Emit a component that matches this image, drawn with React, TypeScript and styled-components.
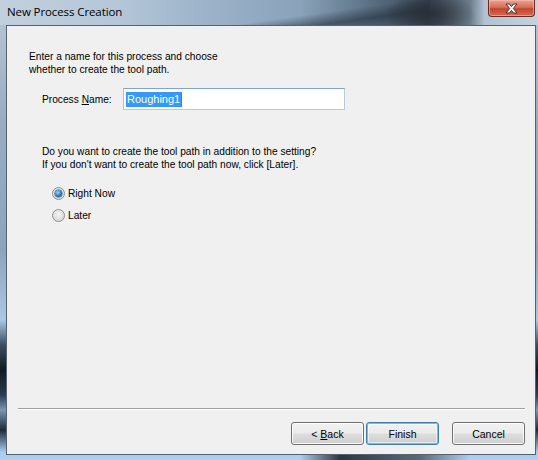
import React from "react";
import styled, { createGlobalStyle } from "styled-components";

const Global = createGlobalStyle`
  html, body { margin: 0; padding: 0; background: #ffffff; }
  body { font-family: "Liberation Sans", Arial, sans-serif; }
`;

const Window = styled.div`
  width: 538px;
  height: 460px;
  display: flex;
  flex-direction: column;
  overflow: hidden;
  background:
    linear-gradient(90deg, transparent 0 300px, rgba(20, 28, 36, 0.85) 340px, rgba(30, 40, 50, 0.6) 420px, transparent 470px) bottom / 100% 6px no-repeat,
    linear-gradient(180deg, #b9c8d6 0px, #98adc2 120px, #8ca4bb 250px, #a9c8e6 320px, #3a4d60 345px, #0f1a24 370px, #2a3c50 395px, #7b97b3 410px, #1d2b38 430px, #a8cbee 452px, #b0d0f0 460px);
`;

const TitleBar = styled.div`
  height: 25px;
  flex: none;
  display: flex;
  align-items: flex-start;
  justify-content: space-between;
  padding: 0 3px 0 7px;
  background:
    radial-gradient(ellipse 45px 22px at 430px 14px, rgba(40, 46, 54, 0.95), rgba(40, 46, 54, 0) 100%),
    linear-gradient(172deg, transparent 0 55%, rgba(30, 40, 52, 0.55) 75%, transparent 100%) 170px 0 / 260px 25px no-repeat,
    linear-gradient(90deg, #c2d0dd 0px, #b4c6d8 120px, #9db4ca 200px, #8aa3ba 300px, #55697c 380px, #3c4955 430px, #6c7c8a 470px, #b2c3d3 485px, #c5d3e0 538px);
`;

const Title = styled.span`
  font-family: "Open Sans", "Noto Sans", sans-serif;
  font-size: 11.5px;
  letter-spacing: -0.1px;
  color: #000;
  line-height: 25px;
  margin-top: -1px;
`;

const CloseButton = styled.div`
  width: 47px;
  height: 17px;
  box-sizing: border-box;
  border: 1px solid #6e2a20;
  border-top: none;
  border-radius: 0 0 4px 4px;
  background: linear-gradient(180deg, #e7a594 0%, #d6705a 45%, #c2462d 55%, #d76a4c 100%);
  box-shadow: inset 0 0 0 1px rgba(255, 200, 190, 0.5);
  display: flex;
  align-items: center;
  justify-content: center;
`;

const Frame = styled.div`
  flex: 1;
  display: flex;
  padding: 0 2px 5px 6px;
  min-height: 0;
`;

const Client = styled.div`
  flex: 1;
  display: flex;
  flex-direction: column;
  background: #f0f0f0;
  border: 1px solid #56626e;
  font-size: 10.2px;
  color: #000;
`;

const TextBlock = styled.div<{ $left: number; $top: number }>`
  margin-left: ${(p) => p.$left}px;
  margin-top: ${(p) => p.$top}px;
  line-height: 13px;
  white-space: nowrap;
`;

const NameRow = styled.div`
  display: flex;
  align-items: center;
  margin-left: 35px;
  margin-top: 12px;
  height: 22px;
`;

const Label = styled.span`
  width: 81px;
`;

const Underline = styled.span`
  text-decoration: underline;
`;

const Input = styled.div`
  width: 222px;
  height: 22px;
  box-sizing: border-box;
  border: 1px solid;
  border-color: #7ea4cf #b5cbe4 #b5cbe4 #a9c2de;
  background: #fff;
  display: flex;
  align-items: center;
  padding-left: 2px;
  font-size: 11px;
`;

const Selection = styled.span`
  background: #3399ff;
  color: #fff;
  line-height: 15px;
  padding: 0 1px;
`;

const Caret = styled.span`
  width: 1px;
  height: 15px;
  background: #c86400;
`;

const RadioGroup = styled.div`
  display: flex;
  flex-direction: column;
  gap: 6px;
  margin-left: 45px;
  margin-top: 14px;
`;

const RadioRow = styled.div`
  display: flex;
  align-items: center;
  height: 16px;
  gap: 3px;
`;

const RadioCircle = styled.span<{ $checked: boolean }>`
  width: 13px;
  height: 13px;
  box-sizing: border-box;
  border-radius: 50%;
  border: 1px solid #8e8f8f;
  background: radial-gradient(circle at 50% 40%, #f4f4f4 0%, #dcdcdc 70%, #cfcfcf 100%);
  display: flex;
  align-items: center;
  justify-content: center;
  &::after {
    content: "";
    display: ${(p) => (p.$checked ? "block" : "none")};
    width: 7px;
    height: 7px;
    border-radius: 50%;
    background: radial-gradient(circle at 40% 35%, #9ad6f5 0%, #2a7cc0 55%, #17477a 100%);
    box-shadow: 0 0 0 0.5px #1b4f80;
  }
`;

const Spacer = styled.div`
  flex: 1;
`;

const Separator = styled.div`
  height: 0;
  border-top: 1px solid #a0a0a0;
  border-bottom: 1px solid #ffffff;
  margin: 0 10px 0 11px;
`;

const ButtonRow = styled.div`
  display: flex;
  justify-content: flex-end;
  padding: 12px 10px 9px 0;
`;

const Button = styled.button<{ $default?: boolean; $gap?: number }>`
  width: 73px;
  height: 23px;
  margin-left: ${(p) => p.$gap ?? 0}px;
  box-sizing: border-box;
  font-family: "Liberation Sans", Arial, sans-serif;
  font-size: 10.5px;
  color: #000;
  padding: 0;
  border-radius: 3px;
  border: 1px solid ${(p) => (p.$default ? "#3c7fb1" : "#707070")};
  background: linear-gradient(180deg, #f2f2f2 0%, #ebebeb 48%, #dddddd 52%, #cfcfcf 100%);
  box-shadow: ${(p) =>
    p.$default
      ? "inset 0 0 0 1px #48d0f8, inset 0 0 0 2px rgba(255,255,255,0.5)"
      : "inset 0 0 0 1px rgba(255,255,255,0.85)"};
`;

function CloseGlyph() {
  return (
    <svg width="15" height="11" viewBox="0 0 15 11">
      <path
        d="M2 1 H5.5 L7.5 3.6 L9.5 1 H13 L9.3 5.5 L13 10 H9.5 L7.5 7.4 L5.5 10 H2 L5.7 5.5 Z"
        fill="#ffffff"
        stroke="#4a2a28"
        strokeWidth="1"
        strokeLinejoin="round"
      />
    </svg>
  );
}

export default function App() {
  return (
    <>
      <Global />
      <Window>
        <TitleBar>
          <Title>New Process Creation</Title>
          <CloseButton>
            <CloseGlyph />
          </CloseButton>
        </TitleBar>
        <Frame>
          <Client>
            <TextBlock $left={22} $top={24}>
              Enter a name for this process and choose
              <br />
              whether to create the tool path.
            </TextBlock>
            <NameRow>
              <Label>
                Process <Underline>N</Underline>ame:
              </Label>
              <Input>
                <Selection>Roughing1</Selection>
                <Caret />
              </Input>
            </NameRow>
            <TextBlock $left={35} $top={35}>
              Do you want to create the tool path in addition to the setting?
              <br />
              If you don't want to create the tool path now, click [Later].
            </TextBlock>
            <RadioGroup>
              <RadioRow>
                <RadioCircle $checked />
                <span>Right Now</span>
              </RadioRow>
              <RadioRow>
                <RadioCircle $checked={false} />
                <span>Later</span>
              </RadioRow>
            </RadioGroup>
            <Spacer />
            <Separator />
            <ButtonRow>
              <Button>
                &lt; <Underline>B</Underline>ack
              </Button>
              <Button $default $gap={2}>
                Finish
              </Button>
              <Button $gap={13}>Cancel</Button>
            </ButtonRow>
          </Client>
        </Frame>
      </Window>
    </>
  );
}
